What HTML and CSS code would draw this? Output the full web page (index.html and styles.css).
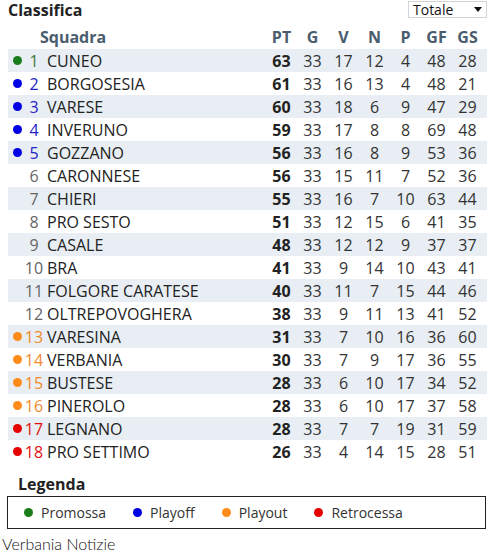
FILE: index.html
```html
<!DOCTYPE html>
<html lang="it">
<head>
<meta charset="utf-8">
<title>Classifica</title>
<link rel="stylesheet" href="styles.css">
</head>
<body>
<div class="widget">
  <div class="topbar">
    <h1 class="title">Classifica</h1>
    <div class="select"><span>Totale</span><span class="caret"></span></div>
  </div>
  <div class="table">
    <div class="row head">
      <span class="c-team">Squadra</span>
      <span class="c">PT</span><span class="c">G</span><span class="c">V</span><span class="c">N</span><span class="c">P</span><span class="c">GF</span><span class="c">GS</span>
    </div>
    <div class="row odd"><span class="dot green"></span><span class="pos green-t">1</span><span class="name">CUNEO</span><b class="c">63</b><span class="c">33</span><span class="c">17</span><span class="c">12</span><span class="c">4</span><span class="c">48</span><span class="c">28</span></div>
    <div class="row"><span class="dot blue"></span><span class="pos blue-t">2</span><span class="name">BORGOSESIA</span><b class="c">61</b><span class="c">33</span><span class="c">16</span><span class="c">13</span><span class="c">4</span><span class="c">48</span><span class="c">21</span></div>
    <div class="row odd"><span class="dot blue"></span><span class="pos blue-t">3</span><span class="name">VARESE</span><b class="c">60</b><span class="c">33</span><span class="c">18</span><span class="c">6</span><span class="c">9</span><span class="c">47</span><span class="c">29</span></div>
    <div class="row"><span class="dot blue"></span><span class="pos blue-t">4</span><span class="name">INVERUNO</span><b class="c">59</b><span class="c">33</span><span class="c">17</span><span class="c">8</span><span class="c">8</span><span class="c">69</span><span class="c">48</span></div>
    <div class="row odd"><span class="dot blue"></span><span class="pos blue-t">5</span><span class="name">GOZZANO</span><b class="c">56</b><span class="c">33</span><span class="c">16</span><span class="c">8</span><span class="c">9</span><span class="c">53</span><span class="c">36</span></div>
    <div class="row"><span class="dot"></span><span class="pos">6</span><span class="name">CARONNESE</span><b class="c">56</b><span class="c">33</span><span class="c">15</span><span class="c">11</span><span class="c">7</span><span class="c">52</span><span class="c">36</span></div>
    <div class="row odd"><span class="dot"></span><span class="pos">7</span><span class="name">CHIERI</span><b class="c">55</b><span class="c">33</span><span class="c">16</span><span class="c">7</span><span class="c">10</span><span class="c">63</span><span class="c">44</span></div>
    <div class="row"><span class="dot"></span><span class="pos">8</span><span class="name">PRO SESTO</span><b class="c">51</b><span class="c">33</span><span class="c">12</span><span class="c">15</span><span class="c">6</span><span class="c">41</span><span class="c">35</span></div>
    <div class="row odd"><span class="dot"></span><span class="pos">9</span><span class="name">CASALE</span><b class="c">48</b><span class="c">33</span><span class="c">12</span><span class="c">12</span><span class="c">9</span><span class="c">37</span><span class="c">37</span></div>
    <div class="row"><span class="dot"></span><span class="pos">10</span><span class="name">BRA</span><b class="c">41</b><span class="c">33</span><span class="c">9</span><span class="c">14</span><span class="c">10</span><span class="c">43</span><span class="c">41</span></div>
    <div class="row odd"><span class="dot"></span><span class="pos">11</span><span class="name">FOLGORE CARATESE</span><b class="c">40</b><span class="c">33</span><span class="c">11</span><span class="c">7</span><span class="c">15</span><span class="c">44</span><span class="c">46</span></div>
    <div class="row"><span class="dot"></span><span class="pos">12</span><span class="name">OLTREPOVOGHERA</span><b class="c">38</b><span class="c">33</span><span class="c">9</span><span class="c">11</span><span class="c">13</span><span class="c">41</span><span class="c">52</span></div>
    <div class="row odd"><span class="dot orange"></span><span class="pos orange-t">13</span><span class="name">VARESINA</span><b class="c">31</b><span class="c">33</span><span class="c">7</span><span class="c">10</span><span class="c">16</span><span class="c">36</span><span class="c">60</span></div>
    <div class="row"><span class="dot orange"></span><span class="pos orange-t">14</span><span class="name">VERBANIA</span><b class="c">30</b><span class="c">33</span><span class="c">7</span><span class="c">9</span><span class="c">17</span><span class="c">36</span><span class="c">55</span></div>
    <div class="row odd"><span class="dot orange"></span><span class="pos orange-t">15</span><span class="name">BUSTESE</span><b class="c">28</b><span class="c">33</span><span class="c">6</span><span class="c">10</span><span class="c">17</span><span class="c">34</span><span class="c">52</span></div>
    <div class="row"><span class="dot orange"></span><span class="pos orange-t">16</span><span class="name">PINEROLO</span><b class="c">28</b><span class="c">33</span><span class="c">6</span><span class="c">10</span><span class="c">17</span><span class="c">37</span><span class="c">58</span></div>
    <div class="row odd"><span class="dot red"></span><span class="pos red-t">17</span><span class="name">LEGNANO</span><b class="c">28</b><span class="c">33</span><span class="c">7</span><span class="c">7</span><span class="c">19</span><span class="c">31</span><span class="c">59</span></div>
    <div class="row"><span class="dot red"></span><span class="pos red-t">18</span><span class="name">PRO SETTIMO</span><b class="c">26</b><span class="c">33</span><span class="c">4</span><span class="c">14</span><span class="c">15</span><span class="c">28</span><span class="c">51</span></div>
  </div>
  <h2 class="legend-title">Legenda</h2>
  <div class="legend">
    <span class="item"><span class="dot green"></span>Promossa</span>
    <span class="item"><span class="dot blue"></span>Playoff</span>
    <span class="item"><span class="dot orange"></span>Playout</span>
    <span class="item"><span class="dot red"></span>Retrocessa</span>
  </div>
</div>
<div class="credit">Verbania Notizie</div>
</body>
</html>
```
FILE: styles.css
```css
* { box-sizing: border-box; }
body {
  margin: 0;
  background: #fff;
  font-family: "Open Sans", "Noto Sans", sans-serif;
  color: #222;
}
.widget { padding: 0 3px 0 8px; }
.topbar {
  height: 25px;
  display: flex;
  justify-content: space-between;
  align-items: flex-start;
}
.title {
  margin: 0;
  font-size: 16px;
  font-weight: 700;
  line-height: 20px;
  color: #222;
}
.select {
  margin-top: 1px;
  width: 79px;
  height: 17px;
  border: 1px solid #d4d4d4;
  display: flex;
  justify-content: space-between;
  align-items: center;
  padding: 0 4px 0 4px;
  font-size: 14px;
  color: #111;
}
.caret {
  width: 0; height: 0;
  border-left: 4px solid transparent;
  border-right: 4px solid transparent;
  border-top: 5px solid #111;
}
.row {
  display: grid;
  grid-template-columns: 16px 20px 222px repeat(7, 31px);
  align-items: center;
  height: 23px;
  font-size: 16px;
  color: #333;
}
.row.odd { background: #e8eef3; }
.row.head {
  height: 24px;
  font-weight: 700;
  color: #4a5c6d;
}
.head .c-team { grid-column: 2 / 4; padding-left: 16px; }
.c { text-align: center; }
b.c { color: #222; font-weight: 700; }
.dot {
  display: inline-block;
  width: 9px; height: 9px;
  border-radius: 50%;
  margin-left: 5px;
}
.green { background: #1a7d1a; }
.blue { background: #0000e6; }
.orange { background: #ff8c1a; }
.red { background: #e60000; }
.pos { text-align: center; color: #666; }
.green-t { color: #3d7d3d; }
.blue-t { color: #2323c8; }
.orange-t { color: #f08a2a; }
.red-t { color: #e01010; }
.name { padding-left: 3px; color: #222; }
.legend-title {
  margin: 10px 0 0 10px;
  font-size: 16px;
  font-weight: 700;
  line-height: 22px;
  color: #222;
}
.legend {
  margin: 1px 1px 0 -1px;
  height: 33px;
  border: 1px solid #222;
  display: flex;
  align-items: center;
  padding-left: 16px;
  gap: 27px;
  font-size: 14px;
  color: #333;
}
.legend .item { display: flex; align-items: center; }
.legend .dot { margin: 0 8px 0 0; }
.credit {
  margin: 6px 0 0 2px;
  font-family: "Lato", sans-serif;
  font-weight: 300;
  font-size: 16px;
  line-height: 18px;
  color: #111;
}
```
